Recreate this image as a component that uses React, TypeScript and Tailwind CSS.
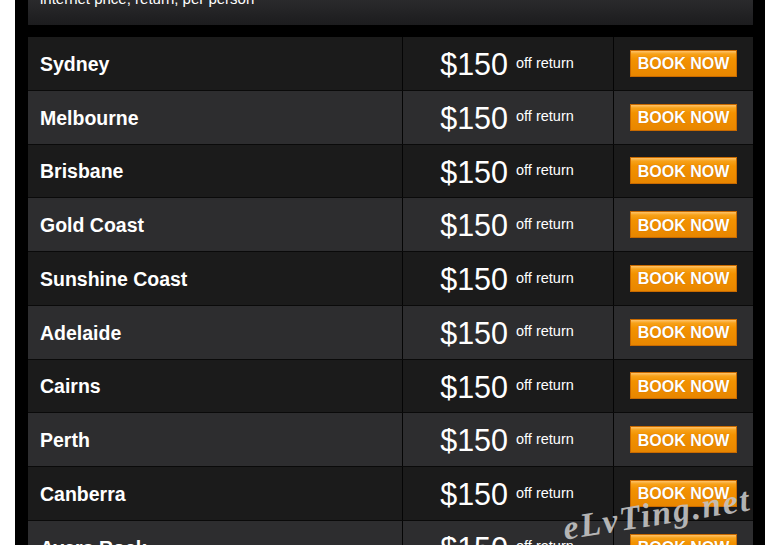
import React from "react";

const cities = [
  "Sydney",
  "Melbourne",
  "Brisbane",
  "Gold Coast",
  "Sunshine Coast",
  "Adelaide",
  "Cairns",
  "Perth",
  "Canberra",
  "Ayers Rock",
];

function Row({ name, light }: { name: string; light: boolean }) {
  return (
    <div
      className={`flex h-[53.75px] shrink-0 border-b border-[#0a0a0a] ${
        light ? "bg-[#2d2d2f]" : "bg-[#1b1b1b]"
      }`}
    >
      <div className="flex w-[374px] shrink-0 items-center pl-[12px] pt-[2px] text-[19.5px] font-bold text-white">
        {name}
      </div>
      <div className="w-px shrink-0 bg-[#050505]" />
      <div className="flex w-[210px] shrink-0 items-center justify-center gap-[8px] pr-[2px] pt-[2px] text-white">
        <span className="text-[30.5px] leading-none">$150</span>
        <span className="mt-[-3px] text-[14.5px] leading-none">off return</span>
      </div>
      <div className="w-px shrink-0 bg-[#050505]" />
      <div className="flex w-[139px] shrink-0 items-center justify-center">
        <div className="flex h-[27px] w-[107px] items-center justify-center border border-[#c96a00] bg-[linear-gradient(to_bottom,#ffc36a_0px,#f7a21a_3px,#f39200_8px,#e88600_100%)] pt-[2px] text-[16px] font-bold leading-none text-white [text-shadow:0_0_1px_rgba(150,70,0,0.6)]">
          BOOK NOW
        </div>
      </div>
    </div>
  );
}

export default function App() {
  return (
    <div
      className="relative h-[545px] w-[769px] overflow-hidden bg-white"
      style={{ fontFamily: '"Liberation Sans", Arial, sans-serif' }}
    >
      <div className="ml-[15px] flex h-full w-[750px] flex-col bg-black pl-[13px] pr-[12px]">
        <div className="h-[25px] shrink-0 overflow-hidden bg-[linear-gradient(to_bottom,#2a2a2c,#1c1c1e)] pl-[12px]">
          <div className="mt-[-10px] text-[15px] leading-[18px] text-white">
            internet price, return, per person
          </div>
        </div>
        <div className="h-[12px] shrink-0" />
        <div className="flex flex-col">
          {cities.map((c, i) => (
            <Row key={c} name={c} light={i % 2 === 1} />
          ))}
        </div>
      </div>
      <div
        className="pointer-events-none absolute left-[562px] top-[488px] text-[34px] font-bold italic tracking-[2px] text-[#c4c4c4] opacity-90"
        style={{ fontFamily: '"Liberation Serif", serif', transform: "rotate(-9deg)" }}
      >
        eLvTing.net
      </div>
    </div>
  );
}
